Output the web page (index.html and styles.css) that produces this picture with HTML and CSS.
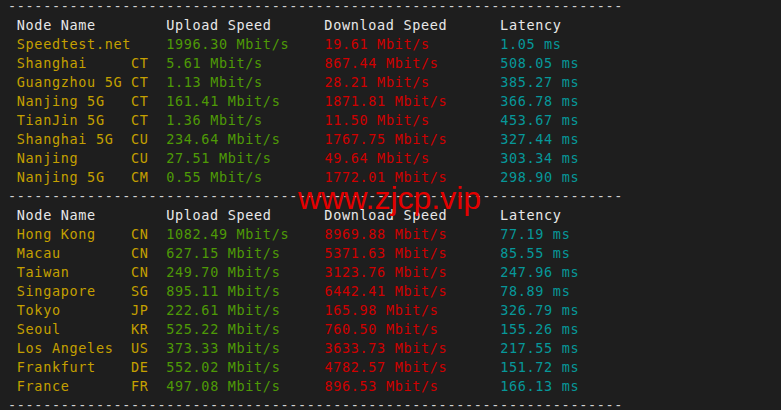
FILE: index.html
```html
<!DOCTYPE html>
<html lang="en">
<head>
  <meta charset="UTF-8">
  <title>Speedtest</title>
  <link rel="stylesheet" href="styles.css">
</head>
<body>
  <div class="term">
<pre class="out"><span class="d">----------------------------------------------------------------------</span>
<span class="h"> Node Name        Upload Speed      Download Speed      Latency</span>
<span class="y"> Speedtest.net    </span><span class="g">1996.30 Mbit/s    </span><span class="r">19.61 Mbit/s        </span><span class="c">1.05 ms</span>
<span class="y"> Shanghai     CT  </span><span class="g">5.61 Mbit/s       </span><span class="r">867.44 Mbit/s       </span><span class="c">508.05 ms</span>
<span class="y"> Guangzhou 5G CT  </span><span class="g">1.13 Mbit/s       </span><span class="r">28.21 Mbit/s        </span><span class="c">385.27 ms</span>
<span class="y"> Nanjing 5G   CT  </span><span class="g">161.41 Mbit/s     </span><span class="r">1871.81 Mbit/s      </span><span class="c">366.78 ms</span>
<span class="y"> TianJin 5G   CT  </span><span class="g">1.36 Mbit/s       </span><span class="r">11.50 Mbit/s        </span><span class="c">453.67 ms</span>
<span class="y"> Shanghai 5G  CU  </span><span class="g">234.64 Mbit/s     </span><span class="r">1767.75 Mbit/s      </span><span class="c">327.44 ms</span>
<span class="y"> Nanjing      CU  </span><span class="g">27.51 Mbit/s      </span><span class="r">49.64 Mbit/s        </span><span class="c">303.34 ms</span>
<span class="y"> Nanjing 5G   CM  </span><span class="g">0.55 Mbit/s       </span><span class="r">1772.01 Mbit/s      </span><span class="c">298.90 ms</span>
<span class="d">----------------------------------------------------------------------</span>
<span class="h"> Node Name        Upload Speed      Download Speed      Latency</span>
<span class="y"> Hong Kong    CN  </span><span class="g">1082.49 Mbit/s    </span><span class="r">8969.88 Mbit/s      </span><span class="c">77.19 ms</span>
<span class="y"> Macau        CN  </span><span class="g">627.15 Mbit/s     </span><span class="r">5371.63 Mbit/s      </span><span class="c">85.55 ms</span>
<span class="y"> Taiwan       CN  </span><span class="g">249.70 Mbit/s     </span><span class="r">3123.76 Mbit/s      </span><span class="c">247.96 ms</span>
<span class="y"> Singapore    SG  </span><span class="g">895.11 Mbit/s     </span><span class="r">6442.41 Mbit/s      </span><span class="c">78.89 ms</span>
<span class="y"> Tokyo        JP  </span><span class="g">222.61 Mbit/s     </span><span class="r">165.98 Mbit/s       </span><span class="c">326.79 ms</span>
<span class="y"> Seoul        KR  </span><span class="g">525.22 Mbit/s     </span><span class="r">760.50 Mbit/s       </span><span class="c">155.26 ms</span>
<span class="y"> Los Angeles  US  </span><span class="g">373.33 Mbit/s     </span><span class="r">3633.73 Mbit/s      </span><span class="c">217.55 ms</span>
<span class="y"> Frankfurt    DE  </span><span class="g">552.02 Mbit/s     </span><span class="r">4782.57 Mbit/s      </span><span class="c">151.72 ms</span>
<span class="y"> France       FR  </span><span class="g">497.08 Mbit/s     </span><span class="r">896.53 Mbit/s       </span><span class="c">166.13 ms</span>
<span class="d">----------------------------------------------------------------------</span></pre>
    <div class="mark">www.zjcp.vip</div>
  </div>
</body>
</html>
```

FILE: styles.css
```css
html, body {
  margin: 0;
  height: 100%;
  background: #1e1e1e;
  overflow: hidden;
}
.term {
  position: relative;
  height: 100%;
  padding-left: 8px;
}
.out {
  margin: -3px 0 0 0;
  font-family: "DejaVu Sans Mono", "Liberation Mono", monospace;
  font-size: 13.5px;
  letter-spacing: 0.66px;
  line-height: 19px;
  color: #cccccc;
}
.d { color: #d0d0d0; }
.h { color: #e8e8e8; }
.y { color: #c4a000; }
.g { color: #4e9a06; }
.r { color: #d00000; }
.c { color: #06989a; }
.mark {
  position: absolute;
  left: 298px;
  top: 185px;
  font-family: "Liberation Sans", Arial, sans-serif;
  font-size: 32px;
  line-height: 1;
  color: #e40000;
}
```
